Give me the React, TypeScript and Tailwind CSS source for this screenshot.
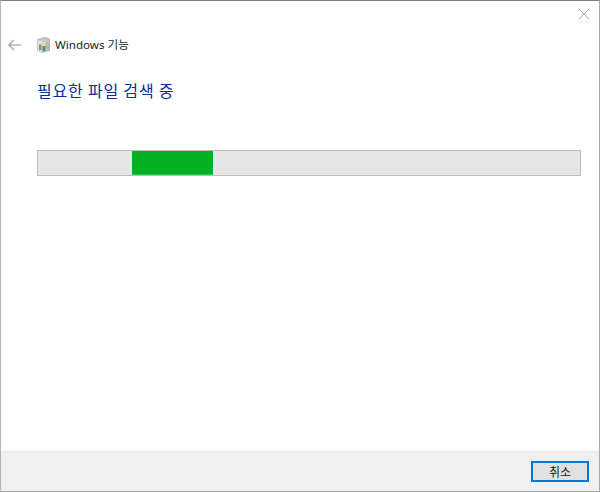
export default function App() {
  return (
    <div className="flex h-[492px] w-[600px] flex-col overflow-hidden border border-t-[#7f7f7f] border-r-[#a8a8a8] border-b-[#a8a8a8] border-l-[#b4b4b4] bg-white font-['Noto_Sans_CJK_KR','Noto_Sans',sans-serif]">
      <div className="h-[8px] shrink-0" />
      <div className="flex h-[10px] shrink-0 justify-end pr-[10px]">
        <svg width="10" height="10" viewBox="0 0 10 10" className="shrink-0">
          <path d="M0 0L10 10M10 0L0 10" stroke="#adadad" strokeWidth="1" fill="none" />
        </svg>
      </div>
      <div className="mt-[15px] flex h-[22px] shrink-0 items-center pl-[7px]">
        <svg width="14" height="12" viewBox="0 0 14 12" className="shrink-0">
          <path d="M6 1L1 6L6 11M1 6H13" stroke="#b3b3b3" strokeWidth="1.6" fill="none" />
        </svg>
        <svg width="15" height="16" viewBox="0 0 15 16" className="ml-[14px] shrink-0">
          <path d="M1.5 2.5L9 0.5L13.5 2V13.5L6 15.5L1.5 13.5Z" fill="#c8c8d4" stroke="#9a9aa6" strokeWidth="0.7" />
          <path d="M1.5 2.5L6 4.5V15.5L1.5 13.5Z" fill="#e2e2e8" />
          <rect x="6.5" y="5" width="3" height="4" fill="#e6dcc0" />
          <rect x="9.5" y="4.5" width="3.5" height="4" fill="#d9b978" />
          <rect x="3" y="7.5" width="2.5" height="5.5" fill="#6f9a72" />
          <rect x="6.5" y="9" width="3" height="5" fill="#5f8f5f" />
          <rect x="9.5" y="8.5" width="3.5" height="4" fill="#a8b6c8" />
        </svg>
        <span className="ml-[4px] text-[11.6px] leading-none text-[#1a1a1a] font-['Noto_Sans','Noto_Sans_CJK_KR',sans-serif]">Windows 기능</span>
      </div>
      <h1 className="mt-[23px] pl-[36px] text-[16px] leading-[22px] font-normal tracking-[0.8px] text-[#003399]">필요한 파일 검색 중</h1>
      <div className="mt-[49px] ml-[36px] flex h-[26px] w-[544px] shrink-0 border border-[#bcbcbc] bg-[#e6e6e6] pl-[94px]">
        <div className="h-full w-[81px] border-b border-[#2cc04a] bg-[#06b025]" />
      </div>
      <div className="flex-1" />
      <div className="flex h-[40px] shrink-0 items-start justify-end border-t border-[#e6e6e6] bg-[#f0f0f0] pt-[9px] pr-[10px]">
        <button className="flex h-[21px] w-[58px] items-center justify-center border-2 border-[#0078d7] bg-[#e1e1e1] text-[12px] leading-none text-[#1a1a1a]">취소</button>
      </div>
    </div>
  );
}
